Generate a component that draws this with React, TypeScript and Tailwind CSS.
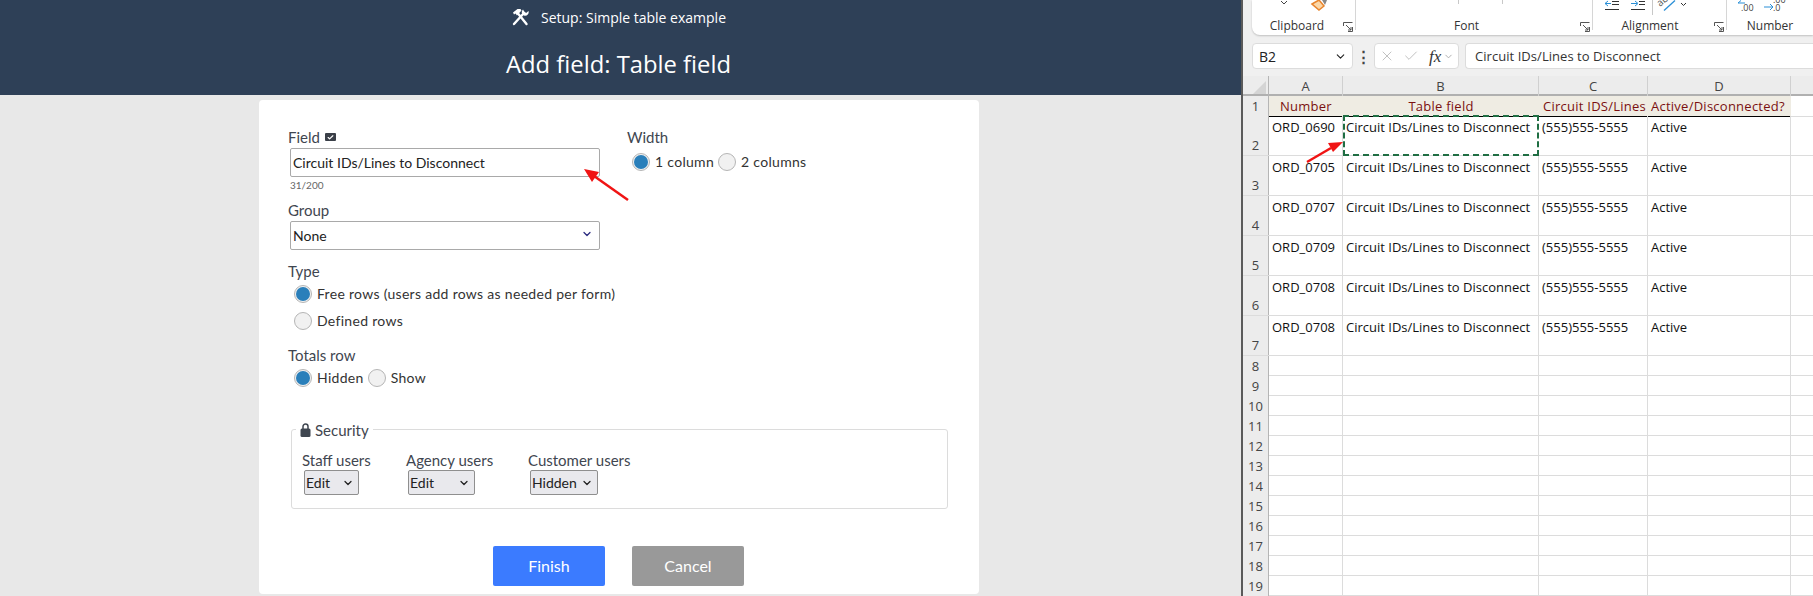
import { Check, ChevronDown, X } from "lucide-react";

const ui = "font-['Lato',sans-serif]";
const sheetFont = "font-['Open_Sans',sans-serif]";

function ToolsIcon() {
  return (
    <svg width="19" height="18" viewBox="0 0 19 18" fill="none" stroke="white" className="mr-[11px]">
      {/* wrench */}
      <path d="M3 16L13 5" strokeWidth="2.4" strokeLinecap="round" />
      <path d="M12 1.5a3.6 3.6 0 0 0 1.5 6.2 3.6 3.6 0 0 0 4-4.6l-2.4 1.9-1.9-1.4z" fill="white" stroke="none" />
      {/* hammer */}
      <path d="M15.5 16L7 5.5" strokeWidth="2.4" strokeLinecap="round" />
      <path d="M2 4.5L6.5 1h3l1 1.5L6 7.5l-1.5-2-1.5 1z" fill="white" stroke="none" />
    </svg>
  );
}

function Radio({ on, label }: { on?: boolean; label: string }) {
  return (
    <span className="inline-flex items-center">
      <span className="flex h-[18px] w-[18px] items-center justify-center rounded-full border border-[#b5b5b5] bg-[#f1f1f1]">
        {on && <span className="h-[14px] w-[14px] rounded-full bg-[#2a7fba]" />}
      </span>
      <span className="ml-[5px] text-[14px] leading-[18px] tracking-[0.3px] text-[#333]">{label}</span>
    </span>
  );
}

function SecuritySelect({ label, value, width, className }: { label: string; value: string; width: string; className: string }) {
  return (
    <div className={className}>
      <div className="text-[15px] leading-[20px] text-[#3f4650]">{label}</div>
      <div className={`ml-[2px] flex h-[25px] items-center justify-between rounded-[2px] border border-[#8f8f8f] bg-[#e9e9ed] pl-[1px] pr-[4px] text-[14px] text-[#222] ${width}`}>
        {value}
        <ChevronDown size={12} strokeWidth={2.5} />
      </div>
    </div>
  );
}

function FormPanel() {
  return (
    <div className={`flex h-full w-[1241px] shrink-0 flex-col bg-[#e8e8e8] ${ui}`}>
      <header className="flex h-[95px] flex-col items-center bg-[#2e4057] pr-[4px] text-white">
        <div className="mt-[6px] flex h-[22px] items-center font-['Open_Sans',sans-serif] text-[14px]">
          <ToolsIcon />
          Setup: Simple table example
        </div>
        <h1 className="mt-[20px] font-['Open_Sans',sans-serif] text-[23.8px] leading-[32px]">Add field: Table field</h1>
      </header>
      <main className="ml-[259px] mt-[5px] h-[494px] w-[720px] rounded-[4px] bg-white pl-[29px] pt-[28px] text-[#3f4650]">
        <div className="flex">
          <div className="w-[339px]">
            <div className="flex h-[18px] items-center text-[15px]">
              Field
              <span className="ml-[5px] flex h-[8px] w-[11px] items-center justify-center rounded-[1px] bg-[#3a3f48] text-white">
                <Check size={7} strokeWidth={4} />
              </span>
            </div>
            <div className="ml-[2px] mt-[2px] flex h-[29px] w-[310px] items-center rounded-[2px] border border-[#a9a9a9] pl-[2px] text-[14px] text-[#222]">
              Circuit IDs/Lines to Disconnect
            </div>
            <div className="ml-[2px] mt-[1px] text-[10px] leading-[14px] text-[#666]">31/200</div>
            <div className="mt-[9px] flex h-[18px] items-center text-[15px]">Group</div>
            <div className="ml-[2px] mt-[2px] flex h-[29px] w-[310px] items-center justify-between rounded-[2px] border border-[#a9a9a9] pl-[2px] pr-[6px] text-[14px] text-[#222]">
              None
              <ChevronDown size={12} strokeWidth={2.5} className="mb-[3px] text-[#2b2b80]" />
            </div>
          </div>
          <div>
            <div className="flex h-[18px] items-center text-[15px]">Width</div>
            <div className="ml-[5px] mt-[7px] flex gap-[4px]">
              <Radio on label="1 column" />
              <Radio label="2 columns" />
            </div>
          </div>
        </div>
        <div className="mt-[12px] flex h-[18px] items-center text-[15px]">Type</div>
        <div className="ml-[6px] mt-[5px] flex flex-col gap-[9px]">
          <Radio on label="Free rows (users add rows as needed per form)" />
          <Radio label="Defined rows" />
        </div>
        <div className="mt-[16px] flex h-[18px] items-center text-[15px]">Totals row</div>
        <div className="ml-[6px] mt-[5px] flex gap-[4px]">
          <Radio on label="Hidden" />
          <Radio label="Show" />
        </div>
        <fieldset className="relative ml-[3px] mt-[42px] flex h-[80px] w-[657px] rounded-[3px] border border-[#dcdcdc] pl-[10px] pt-[20px]">
          <div className="absolute -top-[10px] left-[4px] flex h-[20px] items-center bg-white px-[4px] text-[15px]">
            <svg width="11" height="14" viewBox="0 0 11 14" className="mr-[4px]">
              <path d="M3 6V3.500a2.500 2.500 0 0 1 5 0V6" fill="none" stroke="#3f4650" strokeWidth="1.5" />
              <rect x="0.5" y="5.5" width="10" height="8.5" rx="1.5" fill="#3f4650" />
            </svg>
            Security
          </div>
          <SecuritySelect label="Staff users" value="Edit" width="w-[55px]" className="w-[104px]" />
          <SecuritySelect label="Agency users" value="Edit" width="w-[67px]" className="w-[122px]" />
          <SecuritySelect label="Customer users" value="Hidden" width="w-[68px]" className="" />
        </fieldset>
        <div className="ml-[205px] mt-[37px] flex gap-[27px] text-[16px] text-white">
          <button className="h-[40px] w-[112px] rounded-[2px] bg-[#3b7bff]">Finish</button>
          <button className="h-[40px] w-[112px] rounded-[2px] bg-[#999]">Cancel</button>
        </div>
      </main>
    </div>
  );
}

const rows = [
  ["ORD_0690", 2],
  ["ORD_0705", 3],
  ["ORD_0707", 4],
  ["ORD_0709", 5],
  ["ORD_0708", 6],
  ["ORD_0708", 7],
] as const;
const emptyRows = [8, 9, 10, 11, 12, 13, 14, 15, 16, 17, 18, 19];
const gridCols = "grid grid-cols-[26px_74px_196px_109px_143px_22px]";

function Launcher() {
  return (
    <svg width="10" height="10" viewBox="0 0 10 10" fill="none" stroke="#555" className="shrink-0">
      <path d="M0.5 4V0.5H9.5M3 3l5 5M8 5v3H5M9.5 5v4.5H5" />
    </svg>
  );
}

function RibbonGroup({ label, width, launcher }: { label: string; width: string; launcher?: boolean }) {
  return (
    <div className={`relative flex h-[33px] items-end justify-center text-[12px] leading-[16px] text-[#333] ${width}`}>
      <span className="-mb-[1px]">{label}</span>
      {launcher && <span className="absolute bottom-[1px] right-[3px]"><Launcher /></span>}
    </div>
  );
}

// the bottom row of the ribbon icons, cut off by the top of the picture
function RibbonIcons() {
  return (
    <svg className="absolute left-0 top-0" width="561" height="31" viewBox="0 0 561 31" fill="none">
      <path d="M29 1l3 3 3-3" stroke="#444" />
      <path d="M60 4l7-4 5 6-5 4z" fill="#fbd7a8" stroke="#e8852e" strokeWidth="1.5" />
      <path d="M70 0h5l-2 5z" fill="#888" />
      <path d="M103.500 0v30M340.500 0v30M474.500 0v30" stroke="#d6d6d6" />
      <path d="M206.500 0v4M250.500 0v4M400.500 0v15" stroke="#c8c8c8" />
      <path d="M353 3.500h6M356 1l-3 2.500 3 2.500" stroke="#2a8fd6" />
      <path d="M360 1.500h7M360 4.500h7M353 9.500h14" stroke="#333" />
      <path d="M379 3.500h6M383 1l3 2.500-3 2.500" stroke="#2a8fd6" />
      <path d="M387 1.500h6M387 4.500h6M379 9.500h14" stroke="#333" />
      <text x="408" y="7" fontSize="10" fill="#555" transform="rotate(-40 408 7)">ab</text>
      <path d="M412 10.500L423 0.500" stroke="#2a8fd6" strokeWidth="1.3" />
      <path d="M429 3l2.500 2.500L434 3" stroke="#333" />
      <path d="M486 3h7M489 0.500l-3 2.500" stroke="#2a8fd6" />
      <text x="489" y="11" fontSize="9" fill="#444">.00</text>
      <text x="521" y="3" fontSize="9" fill="#444">.00</text>
      <path d="M512 7h9M518 4l3 3-3 3" stroke="#2a8fd6" />
      <text x="521" y="11" fontSize="9" fill="#444">.0</text>
    </svg>
  );
}

function Sheet() {
  return (
    <div className={`flex h-full min-w-0 flex-1 flex-col border-l-[2px] border-[#5a5a5a] bg-[#f0f0f0] text-[13px] ${sheetFont}`}>
      <div className="relative ml-[9px] flex h-[36px] rounded-bl-[8px] bg-white shadow-[0_1px_2px_rgba(0,0,0,0.2)]">
        <RibbonGroup label="Clipboard" width="w-[104px] pr-[14px]" launcher />
        <RibbonGroup label="Font" width="w-[237px] pr-[16px]" launcher />
        <RibbonGroup label="Alignment" width="w-[134px] pr-[20px]" launcher />
        <RibbonGroup label="Number" width="w-[86px]" />
        <RibbonIcons />
      </div>
      <div className="ml-[9px] mt-[8px] flex h-[26px] items-stretch">
        <div className="flex w-[101px] items-center justify-between rounded-[4px] border border-[#dcdcdc] bg-white pl-[6px] pr-[5px] text-[14px] text-[#222]">
          B2
          <ChevronDown size={13} />
        </div>
        <div className="flex w-[21px] items-center justify-center text-[15px] font-bold leading-none text-[#444]">⋮</div>
        <div className="flex w-[85px] items-center rounded-[4px] border border-[#dcdcdc] bg-white pl-[4px] text-[#aaa]">
          <X size={16} strokeWidth={1.1} />
          <Check size={16} strokeWidth={1.1} className="ml-[8px]" />
          <span className="ml-[10px] font-['Liberation_Serif',serif] text-[17px] italic leading-none text-[#333]">fx</span>
          <ChevronDown size={11} className="ml-[2px]" />
        </div>
        <div className="ml-[6px] flex flex-1 items-center rounded-l-[4px] border border-r-0 border-[#dcdcdc] bg-white pl-[9px] pt-[2px] tracking-[0.05px] text-[#333]">
          Circuit IDs/Lines to Disconnect
        </div>
      </div>
      <div className="mt-[7px] flex-1 bg-white">
        <div className={`${gridCols} h-[20px] border-b-[2px] border-[#b0b0b0] bg-[#ececec] text-center leading-[20px] text-[#444]`}>
          <span className="flex items-end justify-end border-r border-[#b5b5b5] p-[2px]">
            <svg width="13" height="13" viewBox="0 0 13 13"><path d="M13 0v13H0z" fill="#d4d4d4" /></svg>
          </span>
          <span className="border-r border-[#d0d0d0]">A</span>
          <span className="border-r border-[#d0d0d0]">B</span>
          <span className="border-r border-[#d0d0d0]">C</span>
          <span className="border-r border-[#d0d0d0]">D</span>
          <span />
        </div>
        <div className={`${gridCols} h-[20px] leading-[20px] tracking-[0.25px] text-[#7b1010]`}>
          <span className="border-b border-[#dcdcdc] border-r-[#b5b5b5] border-r bg-[#ececec] text-center text-[#444]">1</span>
          <span className="border-b border-black bg-[#efece3] text-center">Number</span>
          <span className="border-b border-black bg-[#efece3] text-center">Table field</span>
          <span className="border-b border-black bg-[#efece3] pl-[4px]">Circuit IDS/Lines</span>
          <span className="border-b border-black bg-[#efece3] pl-[3px]">Active/Disconnected?</span>
          <span className="border-b border-[#dcdcdc]" />
        </div>
        {rows.map(([order, n]) => (
          <div key={n} className={`${gridCols} h-[40px] border-b border-[#dcdcdc] leading-[22px] text-[#111]`}>
            <span className="flex items-end justify-center border-r border-[#b5b5b5] bg-[#ececec] leading-[20px] text-[#444]">{n}</span>
            <span className="border-r border-[#dcdcdc] pl-[3px]">{order}</span>
            <span className={n === 2 ? "-my-px border-[2px] border-dashed border-[#1f6e43] pl-[1px] leading-[20px]" : "border-r border-[#dcdcdc] pl-[3px]"}>
              Circuit IDs/Lines to Disconnect
            </span>
            <span className="border-r border-[#dcdcdc] pl-[3px]">(555)555-5555</span>
            <span className="border-r border-[#dcdcdc] pl-[3px]">Active</span>
            <span />
          </div>
        ))}
        {emptyRows.map((n) => (
          <div key={n} className={`${gridCols} h-[20px] border-b border-[#dcdcdc] leading-[20px]`}>
            <span className="border-r border-[#b5b5b5] bg-[#ececec] text-center text-[#444]">{n}</span>
            <span className="border-r border-[#dcdcdc]" />
            <span className="border-r border-[#dcdcdc]" />
            <span className="border-r border-[#dcdcdc]" />
            <span className="border-r border-[#dcdcdc]" />
            <span />
          </div>
        ))}
      </div>
    </div>
  );
}

export default function App() {
  return (
    <div className="relative flex h-[596px] w-[1813px] overflow-hidden bg-white">
      <FormPanel />
      <Sheet />
      {/* annotation arrows */}
      <svg className="pointer-events-none absolute left-0 top-0" width="1813" height="596" fill="none">
        <path d="M628 200L594 176" stroke="#f01414" strokeWidth="2.5" />
        <path d="M584 169l15 3-7 10z" fill="#f01414" />
        <path d="M1307 162l24-14" stroke="#f01414" strokeWidth="2.5" />
        <path d="M1343 142l-15 1 5 9z" fill="#f01414" />
      </svg>
    </div>
  );
}
